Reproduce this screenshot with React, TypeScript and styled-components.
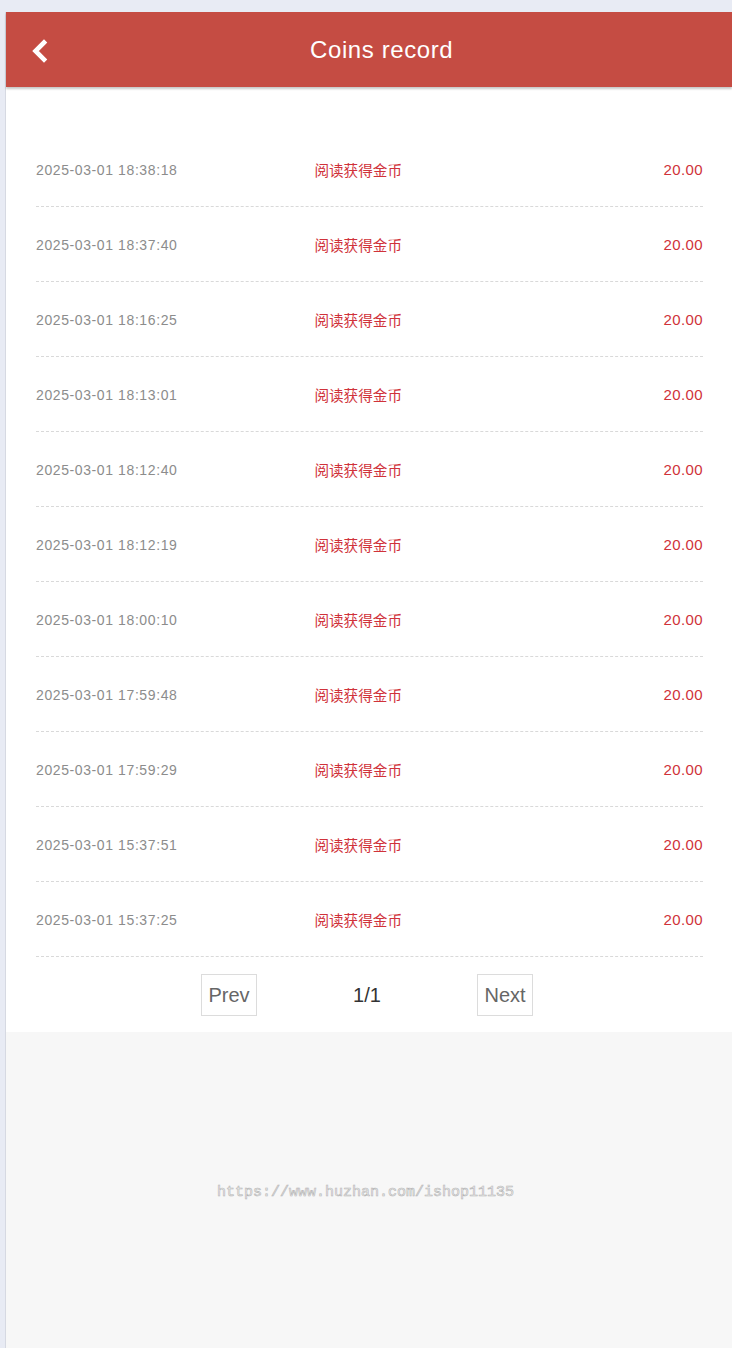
import React from "react";
import styled, { createGlobalStyle } from "styled-components";

const Global = createGlobalStyle`
  html, body { margin: 0; padding: 0; background: #e8ebf4; }
  body { font-family: "Liberation Sans", Arial, "Noto Sans CJK SC", sans-serif; }
  * { box-sizing: border-box; }
`;

const Frame = styled.div`
  padding-top: 12px;
  padding-left: 5px;
`;

const Page = styled.div`
  border-left: 1px solid #d6d9e2;
  background: #f7f7f7;
  min-height: 1336px;
  display: flex;
  flex-direction: column;
`;

const Header = styled.header`
  height: 75px;
  background: #c54c43;
  box-shadow: 0 2px 2px rgba(0, 0, 0, 0.22);
  display: flex;
  align-items: center;
  position: relative;
  z-index: 1;
`;

const Back = styled.div`
  width: 20px;
  height: 24px;
  margin-left: 25px;
  margin-top: 3px;
  display: flex;
  align-items: center;
`;

const Title = styled.h1`
  margin: 1px 0 0 259px;
  font-size: 24px;
  font-weight: normal;
  letter-spacing: 0.6px;
  color: #ffffff;
  line-height: 1;
`;

const Content = styled.section`
  background: #ffffff;
  padding: 45px 29px 16px 30px;
`;

const Row = styled.div`
  height: 75px;
  border-bottom: 1px dashed #d9d9d9;
  display: flex;
  align-items: center;
  padding-top: 2px;
`;

const Time = styled.span`
  font-size: 14px;
  color: #8c8c8c;
  letter-spacing: 0.6px;
`;

const Desc = styled.span`
  margin-left: 137px;
  margin-bottom: 2px;
  font-family: "Noto Sans CJK SC", sans-serif;
  font-size: 14.6px;
  color: #d0323a;
`;

const Amount = styled.span`
  margin-left: auto;
  margin-bottom: 1px;
  font-size: 15px;
  color: #d0323a;
  letter-spacing: 0.4px;
`;

const Pager = styled.div`
  display: flex;
  justify-content: center;
  align-items: center;
  gap: 96px;
  padding-top: 17px;
  padding-right: 5px;
`;

const PageBtn = styled.button`
  height: 42px;
  width: 56px;
  padding: 0;
  border: 1px solid #dcdcdc;
  background: #ffffff;
  color: #666666;
  font-family: "Liberation Sans", Arial, sans-serif;
  font-size: 20px;
`;

const PageNum = styled.span`
  font-size: 20px;
  color: #333333;
  width: 28px;
  text-align: center;
`;

const Footer = styled.div`
  flex: 1;
  display: flex;
  justify-content: center;
  padding-top: 152px;
  padding-right: 7px;
`;

const Watermark = styled.span`
  font-family: "Liberation Mono", "DejaVu Sans Mono", monospace;
  font-size: 15px;
  color: #f4f4f4;
  -webkit-text-stroke: 0.6px #b5b5b5;
`;

const rows: string[] = [
  "2025-03-01 18:38:18",
  "2025-03-01 18:37:40",
  "2025-03-01 18:16:25",
  "2025-03-01 18:13:01",
  "2025-03-01 18:12:40",
  "2025-03-01 18:12:19",
  "2025-03-01 18:00:10",
  "2025-03-01 17:59:48",
  "2025-03-01 17:59:29",
  "2025-03-01 15:37:51",
  "2025-03-01 15:37:25",
];

export default function App() {
  return (
    <>
      <Global />
      <Frame>
        <Page>
          <Header>
            <Back>
              <svg width="18" height="24" viewBox="0 0 18 24">
                <polyline
                  points="13,3.5 4.5,12 13,20.5"
                  fill="none"
                  stroke="#ffffff"
                  strokeWidth="4.6"
                  strokeLinecap="square"
                  strokeLinejoin="miter"
                />
              </svg>
            </Back>
            <Title>Coins record</Title>
          </Header>
          <Content>
            {rows.map((t) => (
              <Row key={t}>
                <Time>{t}</Time>
                <Desc>阅读获得金币</Desc>
                <Amount>20.00</Amount>
              </Row>
            ))}
            <Pager>
              <PageBtn>Prev</PageBtn>
              <PageNum>1/1</PageNum>
              <PageBtn>Next</PageBtn>
            </Pager>
          </Content>
          <Footer>
            <Watermark>https://www.huzhan.com/ishop11135</Watermark>
          </Footer>
        </Page>
      </Frame>
    </>
  );
}
